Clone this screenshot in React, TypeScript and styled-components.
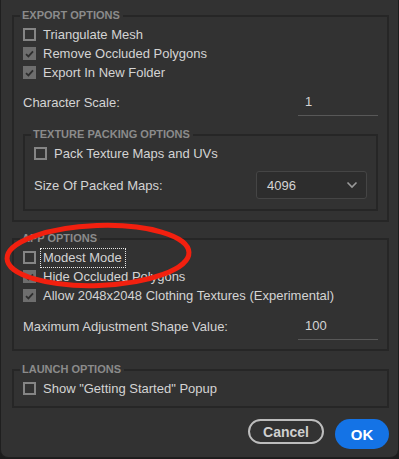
import React from "react";
import styled, { createGlobalStyle } from "styled-components";

const GlobalStyle = createGlobalStyle`
  html, body {
    margin: 0;
    padding: 0;
    background: #1c1c1c;
  }
  body {
    font-family: "Liberation Sans", Arial, sans-serif;
  }
`;

const Window = styled.div`
  position: relative;
  box-sizing: border-box;
  width: 398px;
  height: 458px;
  background: #323232;
  border-left: 1px solid #1f1f1f;
  border-bottom: 1px solid #1f1f1f;
  border-radius: 0 0 8px 8px;
  padding: 9px 9px 0 11px;
  display: flex;
  flex-direction: column;
  color: #d4d4d4;
  font-size: 13px;
`;

const Group = styled.fieldset<{ mt?: number; mb?: number; pb?: number }>`
  margin: ${(p) => p.mt ?? 0}px 0 ${(p) => p.mb ?? 0}px 0;
  padding: 3px 0 ${(p) => p.pb ?? 0}px 0;
  border: 2px solid #262626;
  display: flex;
  flex-direction: column;
  min-width: 0;
`;

const Legend = styled.legend`
  margin-left: 6px;
  padding: 0 3px 0 2px;
  font-size: 11px;
  font-weight: bold;
  line-height: 13px;
  color: #8b8b8b;
`;

const Body = styled.div`
  padding: 0 9px;
  display: flex;
  flex-direction: column;
`;

const CheckRow = styled.label`
  display: flex;
  align-items: center;
  gap: 7px;
  height: 19px;
  line-height: 16px;
  white-space: nowrap;
`;

const Box = styled.span<{ checked?: boolean }>`
  box-sizing: border-box;
  width: 13px;
  height: 13px;
  flex: none;
  border: 2px solid ${(p) => (p.checked ? "#6e6e6e" : "#858585")};
  background: ${(p) => (p.checked ? "#6e6e6e" : "transparent")};
  display: flex;
  align-items: center;
  justify-content: center;
`;

const Focus = styled.span`
  outline: 1px dotted #e8e8e8;
  outline-offset: 1px;
  padding: 0 2px 0 1px;
  margin-left: -1px;
`;

const FieldRow = styled.div<{ mt: number }>`
  display: flex;
  align-items: center;
  justify-content: space-between;
  margin-top: ${(p) => p.mt}px;
  min-height: 26px;
`;

const LineInput = styled.div`
  box-sizing: border-box;
  width: 80px;
  height: 27px;
  margin-bottom: -1px;
  padding: 0 0 1px 7px;
  display: flex;
  align-items: center;
  border-bottom: 1px solid #585858;
  color: #d4d4d4;
`;

const Select = styled.div`
  box-sizing: border-box;
  width: 111px;
  height: 28px;
  border: 1px solid #454545;
  border-radius: 3px;
  background: #2d2d2d;
  display: flex;
  align-items: center;
  justify-content: space-between;
  padding: 0 8px 0 10px;
  color: #d4d4d4;
`;

const Footer = styled.div`
  display: flex;
  justify-content: flex-end;
  align-items: flex-start;
  gap: 11px;
  margin-top: 11px;
`;

const Button = styled.button<{ primary?: boolean }>`
  font-family: "Liberation Sans", Arial, sans-serif;
  font-weight: bold;
  box-sizing: border-box;
  border-radius: 16px;
  cursor: pointer;
  height: ${(p) => (p.primary ? "30px" : "25px")};
  width: ${(p) => (p.primary ? "54px" : "76px")};
  font-size: ${(p) => (p.primary ? "15px" : "14px")};
  color: ${(p) => (p.primary ? "#ffffff" : "#cfcfcf")};
  background: ${(p) => (p.primary ? "#1473e6" : "transparent")};
  border: ${(p) => (p.primary ? "none" : "2px solid #bdbdbd")};
  padding: 0;
`;

const Mark = styled.svg`
  position: absolute;
  left: 0;
  top: 218px;
  pointer-events: none;
`;

function Check(props: { checked?: boolean; label: string; focus?: boolean }) {
  return (
    <CheckRow>
      <Box checked={props.checked}>
        {props.checked && (
          <svg width="9" height="8" viewBox="0 0 9 8">
            <path d="M1 4.2 L3.4 6.4 L8 1.4" fill="none" stroke="#2e2e2e" strokeWidth="1.8" />
          </svg>
        )}
      </Box>
      {props.focus ? <Focus>{props.label}</Focus> : <span>{props.label}</span>}
    </CheckRow>
  );
}

export default function App() {
  return (
    <>
      <GlobalStyle />
      <Window>
        <Group mb={10}>
          <Legend>EXPORT OPTIONS</Legend>
          <Body>
            <Check label="Triangulate Mesh" />
            <Check checked label="Remove Occluded Polygons" />
            <Check checked label="Export In New Folder" />
            <FieldRow mt={7}>
              <span>Character Scale:</span>
              <LineInput>1</LineInput>
            </FieldRow>
            <Group mt={13} mb={9} pb={10}>
              <Legend>TEXTURE PACKING OPTIONS</Legend>
              <Body>
                <Check label="Pack Texture Maps and UVs" />
                <FieldRow mt={8}>
                  <span>Size Of Packed Maps:</span>
                  <Select>
                    <span>4096</span>
                    <svg width="12" height="8" viewBox="0 0 12 8">
                      <path d="M1.5 1.5 L6 6 L10.5 1.5" fill="none" stroke="#9a9a9a" strokeWidth="1.6" />
                    </svg>
                  </Select>
                </FieldRow>
              </Body>
            </Group>
          </Body>
        </Group>
        <Group mb={12} pb={10}>
          <Legend>APP OPTIONS</Legend>
          <Body>
            <Check focus label="Modest Mode" />
            <Check checked label="Hide Occluded Polygons" />
            <Check checked label="Allow 2048x2048 Clothing Textures (Experimental)" />
            <FieldRow mt={8}>
              <span>Maximum Adjustment Shape Value:</span>
              <LineInput>100</LineInput>
            </FieldRow>
          </Body>
        </Group>
        <Group pb={8}>
          <Legend>LAUNCH OPTIONS</Legend>
          <Body>
            <Check label={'Show "Getting Started" Popup'} />
          </Body>
        </Group>
        <Footer>
          <Button>Cancel</Button>
          <Button primary>OK</Button>
        </Footer>
        <Mark width="200" height="80" viewBox="0 0 200 80">
          <ellipse
            cx="97"
            cy="37.5"
            rx="91"
            ry="30"
            transform="rotate(-2 97 37.5)"
            fill="none"
            stroke="#f2200f"
            strokeWidth="5"
          />
        </Mark>
      </Window>
    </>
  );
}
